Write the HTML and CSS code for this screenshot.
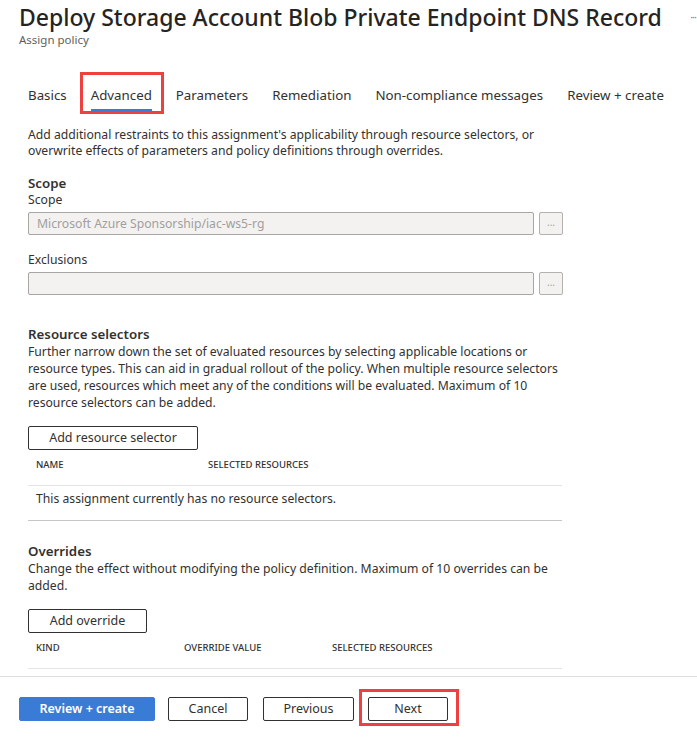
FILE: index.html
```html
<!DOCTYPE html>
<html lang="en">
<head>
<meta charset="utf-8">
<title>Assign policy</title>
<link rel="stylesheet" href="styles.css">
</head>
<body>
<div class="page">
  <header class="head">
    <div class="title-row">
      <h1 class="title">Deploy Storage Account Blob Private Endpoint DNS Record</h1>
      <span class="more">···</span>
    </div>
    <div class="subtitle">Assign policy</div>
  </header>

  <nav class="tabs">
    <span class="tab">Basics</span>
    <span class="tab active highlight">Advanced</span>
    <span class="tab">Parameters</span>
    <span class="tab">Remediation</span>
    <span class="tab">Non-compliance messages</span>
    <span class="tab">Review + create</span>
  </nav>

  <main class="content">
    <p class="intro">Add additional restraints to this assignment's applicability through resource selectors, or overwrite effects of parameters and policy definitions through overrides.</p>

    <h2 class="section-title scope-title">Scope</h2>
    <label class="field-label">Scope</label>
    <div class="field-row">
      <div class="input">Microsoft Azure Sponsorship/iac-ws5-rg</div>
      <span class="dots-btn">...</span>
    </div>
    <label class="field-label excl-label">Exclusions</label>
    <div class="field-row">
      <div class="input"></div>
      <span class="dots-btn">...</span>
    </div>

    <h2 class="section-title rs-title">Resource selectors</h2>
    <p class="desc">Further narrow down the set of evaluated resources by selecting applicable locations or resource types. This can aid in gradual rollout of the policy. When multiple resource selectors are used, resources which meet any of the conditions will be evaluated. Maximum of 10 resource selectors can be added.</p>
    <button class="btn add-rs">Add resource selector</button>
    <div class="table rs-table">
      <div class="thead">
        <span class="th">NAME</span>
        <span class="th">SELECTED RESOURCES</span>
      </div>
      <div class="trow empty">This assignment currently has no resource selectors.</div>
    </div>

    <h2 class="section-title ov-title">Overrides</h2>
    <p class="desc">Change the effect without modifying the policy definition. Maximum of 10 overrides can be added.</p>
    <button class="btn add-ov">Add override</button>
    <div class="table ov-table">
      <div class="thead">
        <span class="th">KIND</span>
        <span class="th">OVERRIDE VALUE</span>
        <span class="th">SELECTED RESOURCES</span>
      </div>
    </div>
  </main>

  <footer class="footer">
    <button class="btn primary w-review">Review + create</button>
    <button class="btn w-cancel">Cancel</button>
    <button class="btn w-prev">Previous</button>
    <button class="btn w-next highlight">Next</button>
  </footer>
</div>
</body>
</html>
```

FILE: styles.css
```css
* { box-sizing: border-box; }
html, body { margin: 0; padding: 0; background: #fff; }
body {
  font-family: "Noto Sans", "Open Sans", "Liberation Sans", sans-serif;
  color: #323130;
  font-size: 12.2px;
}
.page {
  height: 739px;
  display: flex;
  flex-direction: column;
  overflow: hidden;
}
.head { padding: 2px 0 0 19px; }
.title-row { display: flex; align-items: center; height: 30px; }
.title {
  margin: 0;
  font-size: 23px;
  line-height: 30px;
  font-weight: 500;
  white-space: nowrap;
  color: #252423;
}
.more {
  margin-left: auto;
  margin-right: 1px;
  color: #8a8886;
  font-size: 11px;
  letter-spacing: -1px;
  line-height: 14px;
}
.subtitle { font-size: 11.5px; line-height: 16px; color: #605e5c; }

.tabs {
  display: flex;
  margin-top: 37px;
  padding-left: 28px;
  gap: 24px;
}
.tab {
  position: relative;
  font-size: 13.3px;
  line-height: 20px;
  padding-bottom: 4px;
  border-bottom: 2px solid transparent;
  white-space: nowrap;
}
.tab.active { border-bottom-color: #3a7bd5; }
.highlight::after {
  content: "";
  position: absolute;
  border: 3px solid #ee4040;
  pointer-events: none;
}
.tab.highlight::after { top: -13px; left: -11px; right: -12px; bottom: -5px; }

.content {
  flex: 1;
  padding-left: 28px;
  width: 563px;
  overflow: hidden;
}
.intro { margin: 16px 0 0; line-height: 16px; }
.section-title {
  margin: 0;
  font-size: 13.3px;
  font-weight: 600;
  line-height: 18px;
}
.scope-title { margin-top: 15px; }
.field-label { display: block; line-height: 16px; margin-bottom: 4px; }
.excl-label { margin-top: 17px; }
.field-row { display: flex; align-items: center; gap: 5px; }
.input {
  width: 506px;
  height: 23px;
  background: #f3f2f1;
  border: 1px solid #a8a6a4;
  border-radius: 2px;
  color: #a19f9d;
  padding: 0 8px;
  line-height: 21px;
  white-space: nowrap;
}
.dots-btn {
  width: 24px;
  height: 23px;
  border: 1px solid #b3b0ad;
  border-radius: 2px;
  background: #f3f2f1;
  color: #a19f9d;
  font-size: 10px;
  line-height: 19px;
  text-align: center;
}
.rs-title { margin-top: 30px; }
.desc { margin: 0; line-height: 17px; }
.btn {
  display: block;
  font-family: inherit;
  font-size: 12.5px;
  color: #323130;
  background: #fff;
  border: 1px solid #323130;
  border-radius: 2px;
  height: 24px;
  padding: 0;
  line-height: 20px;
  cursor: pointer;
  position: relative;
}
.add-rs { margin-top: 15px; width: 170px; }
.table { width: 534px; }
.thead { display: grid; border-bottom: 1px solid #e6e4e2; padding: 7px 0 12px; }
.rs-table .thead { grid-template-columns: 172px 1fr; }
.ov-table .thead { grid-template-columns: 148px 148px 1fr; }
.th {
  font-size: 9.5px;
  line-height: 16px;
  padding-left: 8px;
  font-weight: 500;
  color: #323130;
}
.trow.empty {
  padding: 5px 0 13px 8px;
  line-height: 16px;
  border-bottom: 1px solid #c8c6c4;
}
.ov-title { margin-top: 21px; }
.add-ov { margin-top: 15px; width: 119px; }

.footer {
  border-top: 1px solid #e1dfdd;
  height: 63px;
  padding: 20px 0 0 19px;
  display: flex;
  align-items: flex-start;
}
.primary {
  background: #3a7bd5;
  border-color: #3a7bd5;
  color: #fff;
  font-weight: 600;
}
.w-review { width: 136px; }
.w-cancel { width: 80px; margin-left: 13px; }
.w-prev { width: 91px; margin-left: 15px; }
.w-next { width: 80px; margin-left: 14px; }
.btn.highlight::after { top: -9px; left: -10px; right: -12px; bottom: -6px; }
```
